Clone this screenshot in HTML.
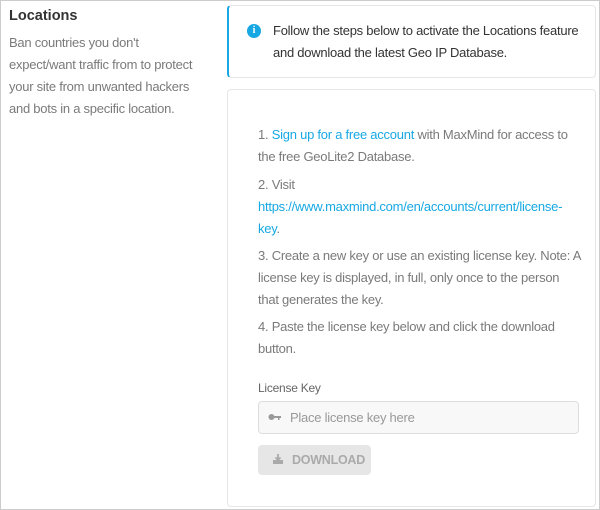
<!DOCTYPE html>
<html><head><style>
*{margin:0;padding:0;box-sizing:border-box}
body{width:600px;height:510px;background:#fff;font-family:"Liberation Sans",sans-serif;position:relative;overflow:hidden}
.frame{position:absolute;left:0;top:0;width:600px;height:510px;border:1px solid #ccc}
.a{position:absolute;white-space:nowrap;font-size:13px;letter-spacing:-0.25px;line-height:16px}
.g{color:#7a7a7a}
.d{color:#333}
.b{color:#17a8e3}
.box{position:absolute;border:1px solid #e6e6e6;border-radius:4px;background:#fff}
</style></head><body>
<div class="frame"></div>
<div class="a d" style="left:9px;top:8px;font-size:14.5px;font-weight:bold;color:#333;letter-spacing:0">Locations</div>
<div class="a g" style="left:9px;top:35px">Ban countries you don't</div>
<div class="a g" style="left:9px;top:57px">expect/want traffic from to protect</div>
<div class="a g" style="left:9px;top:79px">your site from unwanted hackers</div>
<div class="a g" style="left:9px;top:101px">and bots in a specific location.</div>

<div class="box" style="left:227px;top:5px;width:369px;height:73px;border-left:2px solid #17a8e3"></div>
<div style="position:absolute;left:247px;top:24px;width:14px;height:14px;border-radius:50%;background:#17a8e3;color:#fff;font:bold 10px 'Liberation Serif',serif;text-align:center;line-height:14px">i</div>
<div class="a d" style="left:273px;top:23px">Follow the steps below to activate the Locations feature</div>
<div class="a d" style="left:273px;top:45px">and download the latest Geo IP Database.</div>

<div class="box" style="left:227px;top:89px;width:369px;height:418px"></div>
<div class="a g" style="left:258px;top:127px">1. <b class="b" style="font-weight:normal">Sign up for a free account</b> with MaxMind for access to</div>
<div class="a g" style="left:258px;top:149px">the free GeoLite2 Database.</div>
<div class="a g" style="left:258px;top:177px">2. Visit</div>
<div class="a b" style="left:258px;top:199px">https://www.maxmind.com/en/accounts/current/license-</div>
<div class="a b" style="left:258px;top:221px">key<span class="g">.</span></div>
<div class="a g" style="left:258px;top:248px">3. Create a new key or use an existing license key. Note: A</div>
<div class="a g" style="left:258px;top:270px">license key is displayed, in full, only once to the person</div>
<div class="a g" style="left:258px;top:292px">that generates the key.</div>
<div class="a g" style="left:258px;top:319px">4. Paste the license key below and click the download</div>
<div class="a g" style="left:258px;top:341px">button.</div>
<div class="a" style="left:258px;top:380px;color:#666;font-size:12px">License Key</div>
<div style="position:absolute;left:258px;top:401px;width:321px;height:33px;border:1px solid #ddd;border-radius:4px;background:#f8f8f8"></div>
<svg style="position:absolute;left:268px;top:413px" width="14" height="8"><circle cx="3.5" cy="4" r="3" fill="#999"/><rect x="5" y="3" width="8" height="2" fill="#999"/><rect x="10" y="5" width="1.5" height="2" fill="#999"/></svg>
<div class="a" style="left:290px;top:410px;color:#999">Place license key here</div>
<div style="position:absolute;left:258px;top:445px;width:113px;height:30px;border-radius:4px;background:#e6e6e6"></div>
<svg style="position:absolute;left:272px;top:453px" width="12" height="12"><path d="M6 1v6M3.5 4.5L6 7l2.5-2.5" stroke="#aaa" stroke-width="1.8" fill="none"/><path d="M1 7v4h10V7" fill="#aaa"/></svg>
<div class="a" style="left:292px;top:452px;color:#aaa;font-weight:bold;font-size:12.5px">DOWNLOAD</div>
</body></html>
